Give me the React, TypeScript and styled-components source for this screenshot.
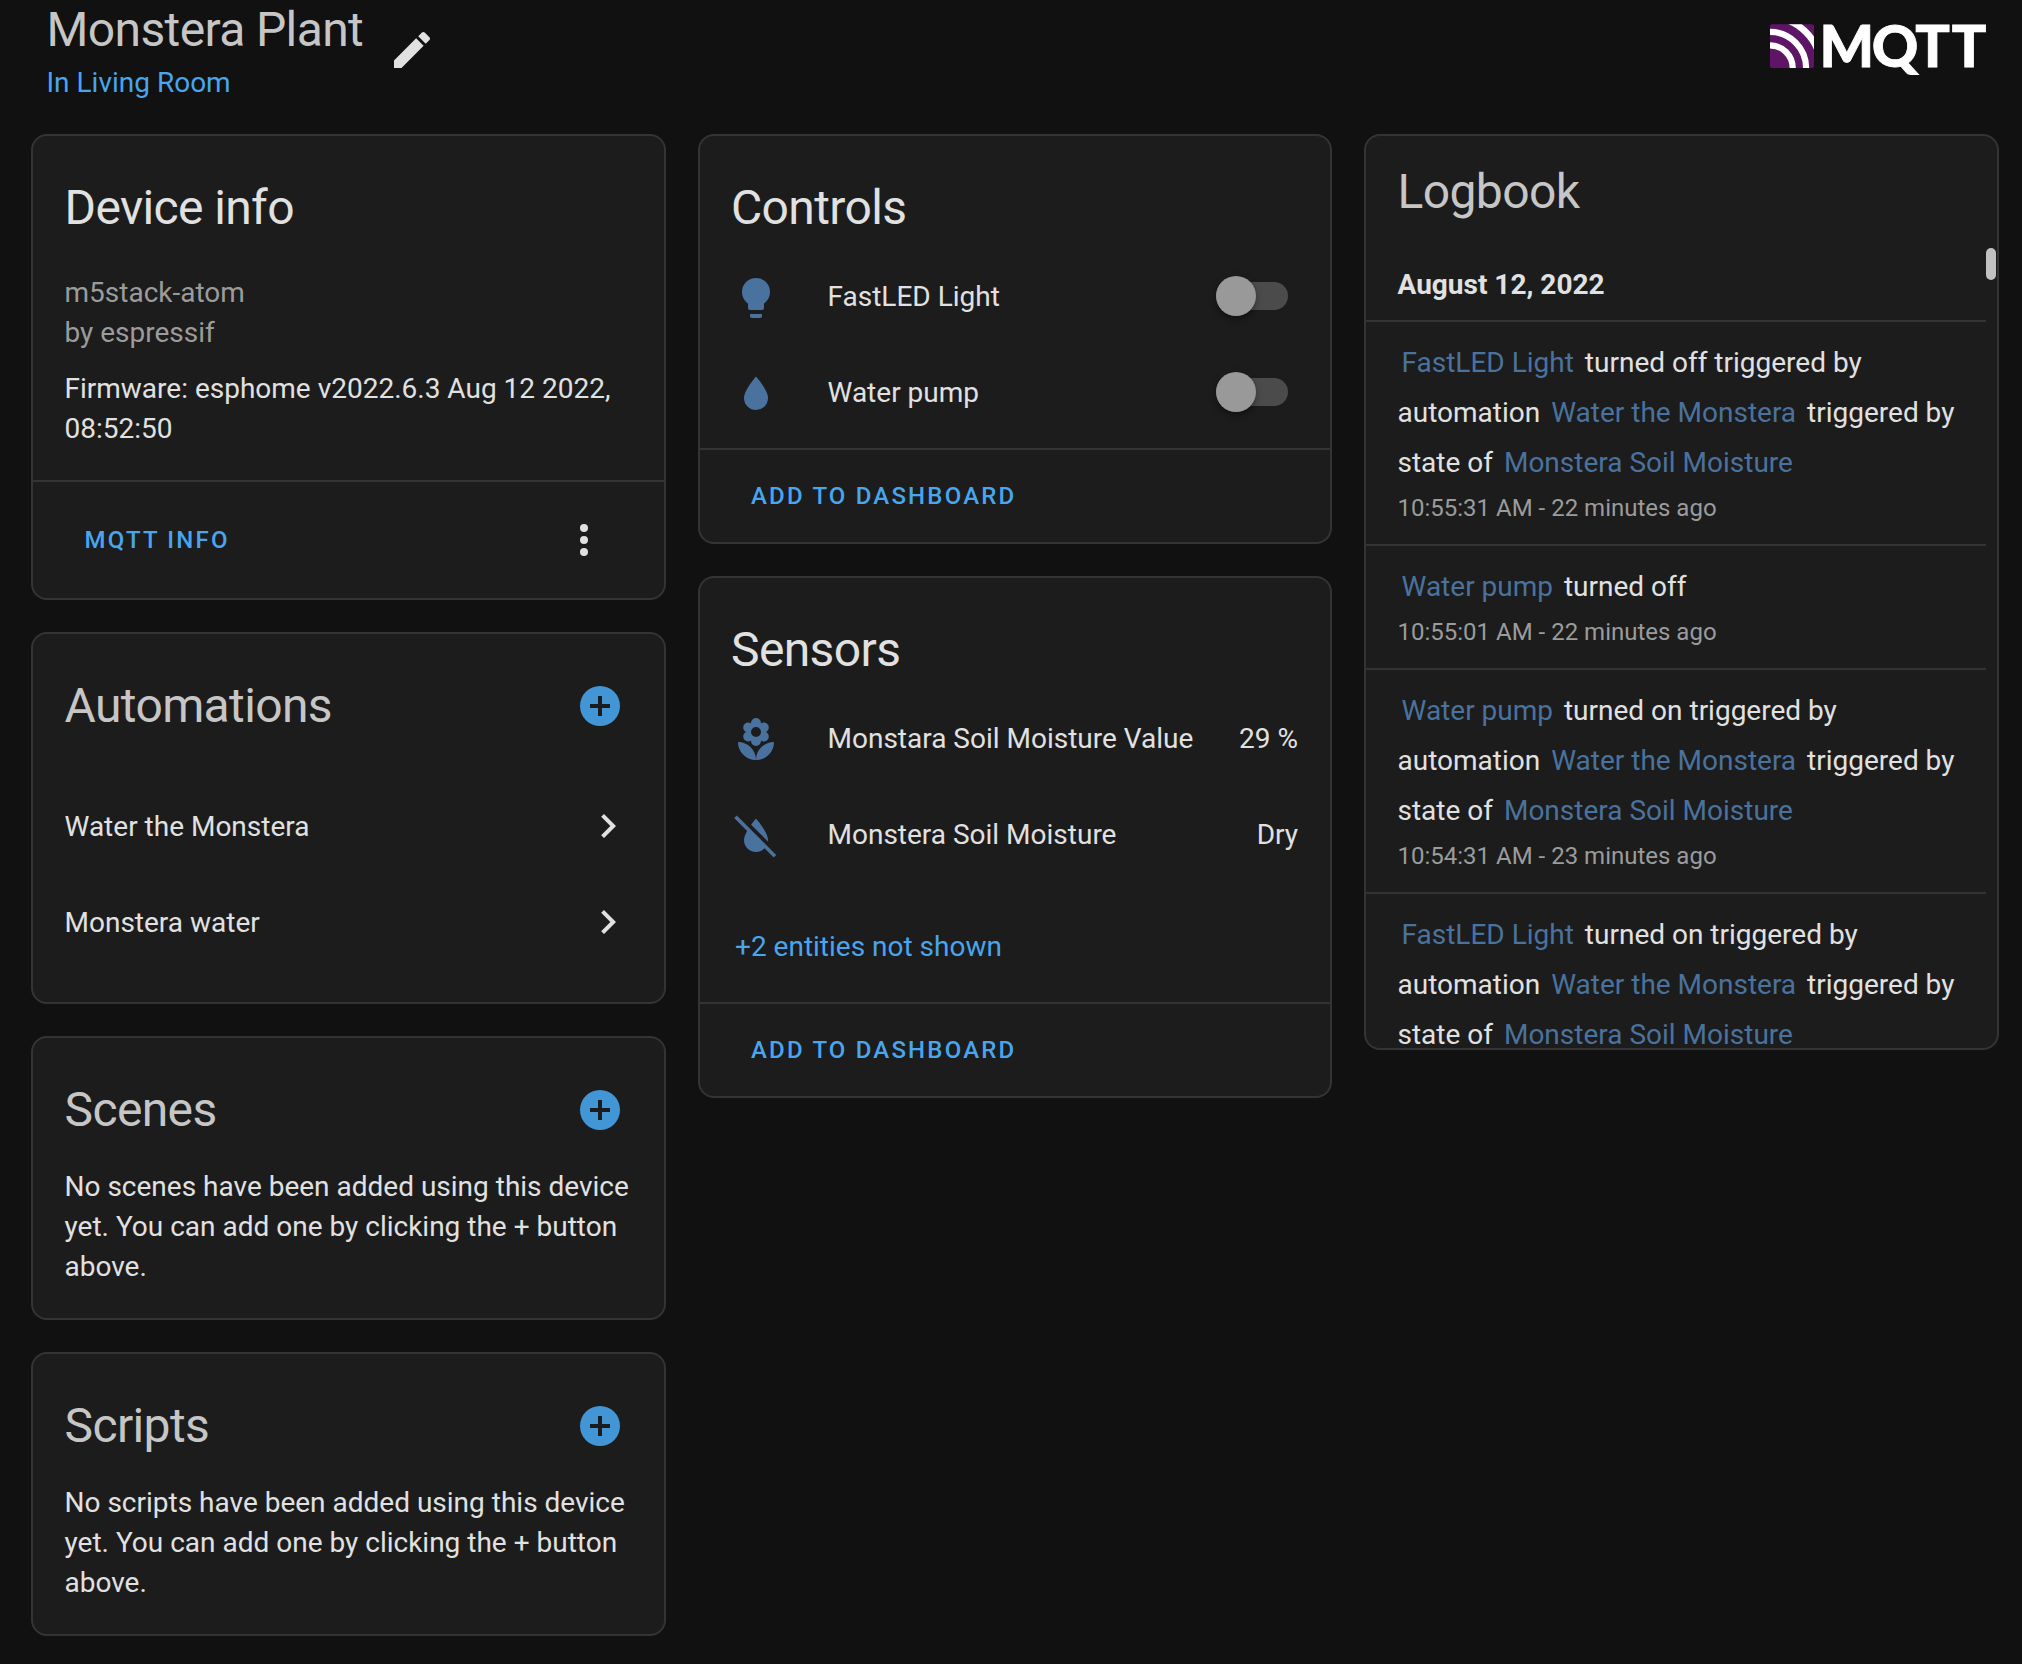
import React from "react";
import styled, { createGlobalStyle } from "styled-components";

const GlobalStyle = createGlobalStyle`
  *, *::before, *::after { box-sizing: border-box; }
  html, body { margin: 0; background: #111111; }
  body {
    width: 2022px;
    height: 1664px;
    overflow: hidden;
    color: #e1e1e1;
    font-family: Roboto, "Noto Sans", sans-serif;
    font-size: 28px;
    line-height: 40px;
    -webkit-font-smoothing: antialiased;
  }
  button { font: inherit; border: 0; background: none; padding: 0; margin: 0; color: inherit; }
  h1, h2, p { margin: 0; font-weight: 400; }
`;

const colors = {
  primary: "#48a5ee",
  icon: "#4a729e",
  divider: "#343434",
  secondary: "#9b9b9b",
};

const icons = {
  pencil:
    "M20.71,7.04C21.1,6.65 21.1,6 20.71,5.63L18.37,3.29C18,2.9 17.35,2.9 16.96,3.29L15.12,5.12L18.87,8.87M3,17.25V21H6.75L17.81,9.93L14.06,6.18L3,17.25Z",
  bulb: "M12,2A7,7 0 0,0 5,9C5,11.38 6.19,13.47 8,14.74V17A1,1 0 0,0 9,18H15A1,1 0 0,0 16,17V14.74C17.81,13.47 19,11.38 19,9A7,7 0 0,0 12,2M9,21A1,1 0 0,0 10,22H14A1,1 0 0,0 15,21V20H9V21Z",
  water:
    "M12,20A6,6 0 0,1 6,14C6,10 12,3.25 12,3.25C12,3.25 18,10 18,14A6,6 0 0,1 12,20Z",
  waterOff:
    "M20.84 22.73L16.29 18.18C15.2 19.3 13.69 20 12 20C8.69 20 6 17.31 6 14C6 12.67 6.67 11.03 7.55 9.44L1.11 3L2.39 1.73L22.11 21.46L20.84 22.73M18 14C18 10 12 3.25 12 3.25C12 3.25 10.84 4.55 9.55 6.35L17.95 14.75C18 14.5 18 14.25 18 14Z",
  flower:
    "M3,13A9,9 0 0,0 12,22C12,17 7.97,13 3,13M12,5.5A2.5,2.5 0 0,1 14.5,8A2.5,2.5 0 0,1 12,10.5A2.5,2.5 0 0,1 9.5,8A2.5,2.5 0 0,1 12,5.5M5.6,10.25A2.5,2.5 0 0,0 8.1,12.75C8.63,12.75 9.12,12.58 9.5,12.31C9.5,12.37 9.5,12.43 9.5,12.5A2.5,2.5 0 0,0 12,15A2.5,2.5 0 0,0 14.5,12.5C14.5,12.43 14.5,12.37 14.5,12.31C14.88,12.58 15.37,12.75 15.9,12.75C17.28,12.75 18.4,11.63 18.4,10.25C18.4,9.25 17.81,8.4 16.97,8C17.81,7.6 18.4,6.74 18.4,5.75C18.4,4.37 17.28,3.25 15.9,3.25C15.37,3.25 14.88,3.41 14.5,3.69C14.5,3.63 14.5,3.56 14.5,3.5A2.5,2.5 0 0,0 12,1A2.5,2.5 0 0,0 9.5,3.5C9.5,3.56 9.5,3.63 9.5,3.69C9.12,3.41 8.63,3.25 8.1,3.25A2.5,2.5 0 0,0 5.6,5.75C5.6,6.74 6.19,7.6 7.03,8C6.19,8.4 5.6,9.25 5.6,10.25M12,22A9,9 0 0,0 21,13C16,13 12,17 12,22Z",
  plusCircle:
    "M17,13H13V17H11V13H7V11H11V7H13V11H17M12,2A10,10 0 0,0 2,12A10,10 0 0,0 12,22A10,10 0 0,0 22,12A10,10 0 0,0 12,2Z",
  chevron: "M8.59,16.58L13.17,12L8.59,7.41L10,6L16,12L10,18L8.59,16.58Z",
  dots: "M12,16A2,2 0 0,1 14,18A2,2 0 0,1 12,20A2,2 0 0,1 10,18A2,2 0 0,1 12,16M12,10A2,2 0 0,1 14,12A2,2 0 0,1 12,14A2,2 0 0,1 10,12A2,2 0 0,1 12,10M12,4A2,2 0 0,1 14,6A2,2 0 0,1 12,8A2,2 0 0,1 10,6A2,2 0 0,1 12,4Z",
};

const Svg = styled.svg`
  display: block;
  flex: none;
  width: 48px;
  height: 48px;
  fill: currentColor;
`;

const Icon = ({ name }: { name: keyof typeof icons }) => (
  <Svg viewBox="0 0 24 24">
    <path d={icons[name]} />
  </Svg>
);

const Page = styled.div`
  width: 2022px;
  height: 1664px;
  overflow: hidden;
  background: #111111;
`;

const Header = styled.header`
  display: flex;
  justify-content: space-between;
  align-items: flex-start;
  height: 134px;
  padding: 0 35px 0 46.5px;
`;

const Device = styled.div`
  display: flex;
`;

const DeviceName = styled.h1`
  height: 63px;
  line-height: 60px;
  font-size: 48px;
  letter-spacing: -0.013em;
  color: #c6c6c6;
`;

const Area = styled.a`
  display: block;
  color: ${colors.primary};
`;

const IconButton = styled.button<{ $color?: string }>`
  display: flex;
  flex: none;
  align-items: center;
  justify-content: center;
  width: 96px;
  height: 96px;
  color: ${(p) => p.$color ?? "#e1e1e1"};
`;

const EditButton = styled(IconButton)`
  margin: 2px 0 0 0.5px;
`;

const Logo = styled.svg`
  display: block;
  width: 217px;
  height: 56px;
  margin-top: 24px;
`;

const Columns = styled.main`
  display: grid;
  grid-template-columns: repeat(3, 634.5px);
  column-gap: 32px;
  padding-left: 31px;
  align-items: start;
`;

const Column = styled.div`
  display: flex;
  flex-direction: column;
  gap: 32px;
`;

const Card = styled.section<{ $height?: number }>`
  display: flex;
  flex-direction: column;
  height: ${(p) => (p.$height ? `${p.$height}px` : "auto")};
  border: 2px solid ${colors.divider};
  border-radius: 16px;
  background: #1c1c1c;
  overflow: hidden;
`;

const CardHeader = styled.div<{ $dim?: boolean }>`
  display: flex;
  flex: none;
  justify-content: space-between;
  padding: 24px 15.5px 0 31.5px;
  color: ${(p) => (p.$dim ? "#c6c6c6" : "#e1e1e1")};
`;

const CardTitle = styled.h2`
  font-size: 48px;
  line-height: 96px;
  letter-spacing: -0.013em;
`;

const InfoContent = styled.div`
  padding: 17px 31px 31px 31.5px;
`;

const Model = styled.p`
  color: ${colors.secondary};
`;

const Firmware = styled.p`
  margin-top: 16px;
`;

const EmptyText = styled.p`
  padding: 9px 31px 31px 31.5px;
`;

const Actions = styled.footer<{ $height: number }>`
  display: flex;
  align-items: center;
  justify-content: space-between;
  height: ${(p) => p.$height}px;
  padding: 0 31.5px 0 51.5px;
  border-top: 2px solid ${colors.divider};
`;

const TextButton = styled.button`
  color: ${colors.primary};
  font-size: 24px;
  font-weight: 500;
  line-height: 40px;
  letter-spacing: 2.18px;
`;

const LinkList = styled.div`
  padding: 24px 31.5px 32px;
`;

const LinkRow = styled.a`
  display: flex;
  align-items: center;
  justify-content: space-between;
  height: 96px;
`;

const RowText = styled.span`
  padding-top: 2px;
`;

const Entities = styled.div`
  display: flex;
  flex-direction: column;
  gap: 16px;
  padding: 0 32px 16px 16.5px;
`;

const EntityRow = styled.div`
  display: flex;
  align-items: center;
  height: 80px;
`;

const Badge = styled.span`
  display: flex;
  justify-content: center;
  width: 80px;
  margin-right: 31.5px;
  padding-top: 4px;
  color: ${colors.icon};
`;

const EntityName = styled(RowText)`
  flex: 1;
`;

const Track = styled.span`
  display: flex;
  align-items: center;
  width: 72px;
  height: 28px;
  margin-right: 10px;
  border-radius: 14px;
  background: #4b4b4b;
`;

const Thumb = styled.span`
  width: 40px;
  height: 40px;
  border-radius: 50%;
  background: #999999;
  box-shadow: 0 4px 4px rgba(0, 0, 0, 0.2), 0 2px 8px rgba(0, 0, 0, 0.16);
`;

const MoreEntities = styled.button`
  height: 112px;
  padding: 2px 0 0 35.5px;
  text-align: left;
  color: ${colors.primary};
`;

const LogTitle = styled.h2`
  flex: none;
  height: 112px;
  padding-left: 31.5px;
  font-size: 48px;
  line-height: 112px;
  letter-spacing: -0.013em;
  color: #c6c6c6;
`;

const LogBody = styled.div`
  display: flex;
  flex: 1;
  min-height: 0;
  overflow: hidden;
`;

const LogList = styled.div`
  flex: 1;
`;

const ScrollTrack = styled.div`
  width: 10px;
  margin-right: 0.5px;
`;

const ScrollThumb = styled.div`
  height: 32px;
  border-radius: 5px;
  background: #c1c1c1;
`;

const LogDate = styled.h2`
  padding: 17px 32px 15px 31.5px;
  height: 72px;
  font-size: 28px;
  font-weight: 700;
`;

const LogItem = styled.div`
  padding: 16px 16px 16px 31.5px;
  border-top: 2px solid ${colors.divider};
`;

const LogMessage = styled.p`
  line-height: 50px;
`;

const LogLink = styled.a`
  padding: 0 4px;
  color: ${colors.icon};
`;

const LogTime = styled.p`
  font-size: 24px;
  color: ${colors.secondary};
`;

const MqttLogo = () => (
  <Logo viewBox="0 0 217 56">
    <defs>
      <clipPath id="tile">
        <rect y="0.3" width="44" height="43.7" rx="2" />
      </clipPath>
    </defs>
    <g clipPath="url(#tile)">
      <rect width="44" height="44" fill="#5f1566" />
      <g fill="none" stroke="#ffffff">
        <circle cx="0" cy="44" r="22.7" strokeWidth="6.2" />
        <circle cx="0" cy="44" r="36.1" strokeWidth="6.2" />
        <circle cx="0" cy="44" r="50.8" strokeWidth="6.6" />
      </g>
    </g>
    <text
      x="49.6 101.8 145.3 181.7"
      y="43.3"
      fill="#ffffff"
      stroke="#ffffff"
      strokeWidth="0.8"
      fontFamily="Lato, sans-serif"
      fontWeight="900"
      fontSize="57.4"
    >
      MQTT
    </text>
  </Logo>
);

const ToggleRow = ({ icon, name }: { icon: keyof typeof icons; name: string }) => (
  <EntityRow>
    <Badge>
      <Icon name={icon} />
    </Badge>
    <EntityName>{name}</EntityName>
    <Track>
      <Thumb />
    </Track>
  </EntityRow>
);

const SensorRow = ({
  icon,
  name,
  value,
}: {
  icon: keyof typeof icons;
  name: string;
  value: string;
}) => (
  <EntityRow>
    <Badge>
      <Icon name={icon} />
    </Badge>
    <EntityName>{name}</EntityName>
    <RowText>{value}</RowText>
  </EntityRow>
);

const AddHeader = ({ title }: { title: string }) => (
  <CardHeader $dim>
    <CardTitle>{title}</CardTitle>
    <IconButton $color="#4296d6">
      <Icon name="plusCircle" />
    </IconButton>
  </CardHeader>
);

const LogEntry = ({
  entity,
  action,
  triggered,
  time,
}: {
  entity: string;
  action: string;
  triggered?: boolean;
  time?: string;
}) => (
  <LogItem>
    <LogMessage>
      <LogLink>{entity}</LogLink> {action}
      {triggered && (
        <>
          {" "}
          triggered by automation <LogLink>Water the Monstera</LogLink> triggered by state of{" "}
          <LogLink>Monstera Soil Moisture</LogLink>
        </>
      )}
    </LogMessage>
    {time && <LogTime>{time}</LogTime>}
  </LogItem>
);

export default function App() {
  return (
    <>
      <GlobalStyle />
      <Page>
        <Header>
          <Device>
            <div>
              <DeviceName>Monstera Plant</DeviceName>
              <Area>In Living Room</Area>
            </div>
            <EditButton>
              <Icon name="pencil" />
            </EditButton>
          </Device>
          <MqttLogo />
        </Header>
        <Columns>
          <Column>
            <Card>
              <CardHeader>
                <CardTitle>Device info</CardTitle>
              </CardHeader>
              <InfoContent>
                <Model>m5stack-atom</Model>
                <Model>by espressif</Model>
                <Firmware>Firmware: esphome v2022.6.3 Aug 12 2022, 08:52:50</Firmware>
              </InfoContent>
              <Actions $height={118}>
                <TextButton>MQTT INFO</TextButton>
                <IconButton>
                  <Icon name="dots" />
                </IconButton>
              </Actions>
            </Card>
            <Card>
              <AddHeader title="Automations" />
              <LinkList>
                <LinkRow>
                  <RowText>Water the Monstera</RowText>
                  <Icon name="chevron" />
                </LinkRow>
                <LinkRow>
                  <RowText>Monstera water</RowText>
                  <Icon name="chevron" />
                </LinkRow>
              </LinkList>
            </Card>
            <Card>
              <AddHeader title="Scenes" />
              <EmptyText>
                No scenes have been added using this device yet. You can add one by clicking the +
                button above.
              </EmptyText>
            </Card>
            <Card>
              <AddHeader title="Scripts" />
              <EmptyText>
                No scripts have been added using this device yet. You can add one by clicking the +
                button above.
              </EmptyText>
            </Card>
          </Column>
          <Column>
            <Card>
              <CardHeader>
                <CardTitle>Controls</CardTitle>
              </CardHeader>
              <Entities>
                <ToggleRow icon="bulb" name="FastLED Light" />
                <ToggleRow icon="water" name="Water pump" />
              </Entities>
              <Actions $height={94}>
                <TextButton>ADD TO DASHBOARD</TextButton>
              </Actions>
            </Card>
            <Card>
              <CardHeader>
                <CardTitle>Sensors</CardTitle>
              </CardHeader>
              <Entities>
                <SensorRow icon="flower" name="Monstara Soil Moisture Value" value="29 %" />
                <SensorRow icon="waterOff" name="Monstera Soil Moisture" value="Dry" />
              </Entities>
              <MoreEntities>+2 entities not shown</MoreEntities>
              <Actions $height={94}>
                <TextButton>ADD TO DASHBOARD</TextButton>
              </Actions>
            </Card>
          </Column>
          <Column>
            <Card $height={916}>
              <LogTitle>Logbook</LogTitle>
              <LogBody>
                <LogList>
                  <LogDate>August 12, 2022</LogDate>
                  <LogEntry
                    entity="FastLED Light"
                    action="turned off"
                    triggered
                    time="10:55:31 AM - 22 minutes ago"
                  />
                  <LogEntry
                    entity="Water pump"
                    action="turned off"
                    time="10:55:01 AM - 22 minutes ago"
                  />
                  <LogEntry
                    entity="Water pump"
                    action="turned on"
                    triggered
                    time="10:54:31 AM - 23 minutes ago"
                  />
                  <LogEntry entity="FastLED Light" action="turned on" triggered />
                </LogList>
                <ScrollTrack>
                  <ScrollThumb />
                </ScrollTrack>
              </LogBody>
            </Card>
          </Column>
        </Columns>
      </Page>
    </>
  );
}
